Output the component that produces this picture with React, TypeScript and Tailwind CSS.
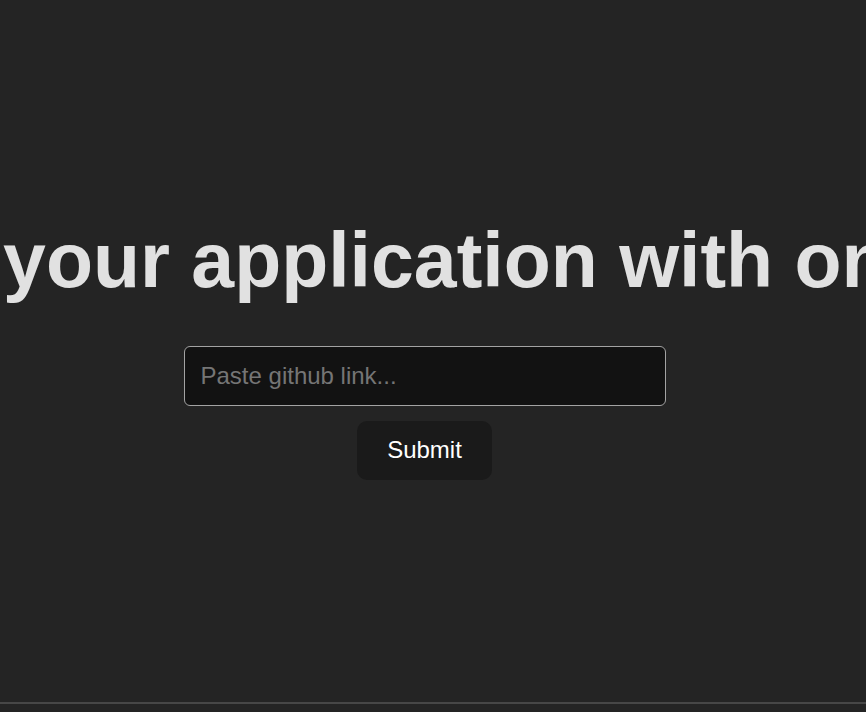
export default function App() {
  return (
    <div className="min-h-[712px] w-full overflow-hidden bg-[#242424] font-['Liberation_Sans',Arial,sans-serif] text-[rgba(255,255,255,0.87)]">
      <main className="flex h-[702px] w-[849px] flex-col items-center pt-[218px]">
        <div className="flex w-full justify-center">
          <h1 className="shrink-0 whitespace-nowrap text-center text-[77px] font-bold leading-[1.1] text-[#e1e1e1]">
            Deploy your application with one click
          </h1>
        </div>

        <form
          className="mt-[43px] flex flex-col items-center gap-[15px]"
          onSubmit={(e) => e.preventDefault()}
        >
          <input
            type="text"
            placeholder="Paste github link..."
            className="h-[60px] w-[482px] rounded-[6px] border border-[#a3a3a3] bg-[#121212] px-4 text-[24px] text-white outline-none placeholder:text-[#757575]"
          />
          <button
            type="submit"
            className="h-[59px] w-[135px] rounded-[10px] bg-[#1a1a1a] text-[24px] font-medium text-white"
          >
            Submit
          </button>
        </form>
      </main>
      <div className="h-[10px] border-t-2 border-[#474747]" />
    </div>
  )
}
